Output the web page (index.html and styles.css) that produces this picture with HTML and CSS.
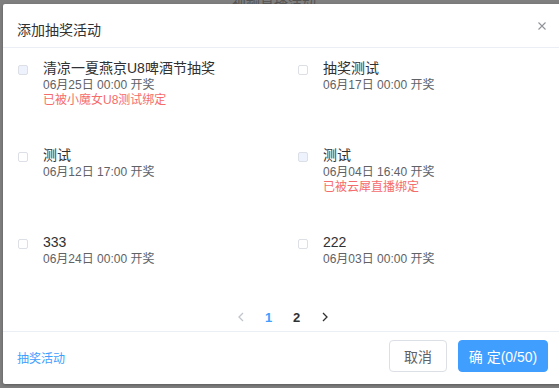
FILE: index.html
```html
<!DOCTYPE html>
<html lang="zh-CN">
<head>
    <meta charset="UTF-8">
    <meta name="viewport" content="width=device-width, initial-scale=1.0">
    <title>添加抽奖活动</title>
    <link rel="stylesheet" href="styles.css">
</head>
<body>
    <div class="page-behind">视频直播活动</div>
    <div class="overlay"></div>

    <div class="dialog">
        <div class="dialog-header">
            <span class="dialog-title">添加抽奖活动</span>
            <span class="dialog-close">
                <svg width="8" height="8" viewBox="0 0 8 8"><path d="M0.5 0.5 L7.5 7.5 M7.5 0.5 L0.5 7.5" stroke="#909399" stroke-width="1.1" fill="none"/></svg>
            </span>
        </div>

        <div class="dialog-body">
            <div class="lottery-list">
                <label class="lottery-item">
                    <span class="checkbox disabled"></span>
                    <span class="info">
                        <span class="name">清凉一夏燕京U8啤酒节抽奖</span>
                        <span class="time">06月25日 00:00 开奖</span>
                        <span class="bound">已被小魔女U8测试绑定</span>
                    </span>
                </label>
                <label class="lottery-item">
                    <span class="checkbox"></span>
                    <span class="info">
                        <span class="name">抽奖测试</span>
                        <span class="time">06月17日 00:00 开奖</span>
                    </span>
                </label>
                <label class="lottery-item">
                    <span class="checkbox"></span>
                    <span class="info">
                        <span class="name">测试</span>
                        <span class="time">06月12日 17:00 开奖</span>
                    </span>
                </label>
                <label class="lottery-item">
                    <span class="checkbox disabled"></span>
                    <span class="info">
                        <span class="name">测试</span>
                        <span class="time">06月04日 16:40 开奖</span>
                        <span class="bound">已被云犀直播绑定</span>
                    </span>
                </label>
                <label class="lottery-item">
                    <span class="checkbox"></span>
                    <span class="info">
                        <span class="name">333</span>
                        <span class="time">06月24日 00:00 开奖</span>
                    </span>
                </label>
                <label class="lottery-item">
                    <span class="checkbox"></span>
                    <span class="info">
                        <span class="name">222</span>
                        <span class="time">06月03日 00:00 开奖</span>
                    </span>
                </label>
            </div>

            <div class="pagination">
                <span class="pager-btn disabled">
                    <svg width="6" height="10" viewBox="0 0 6 10"><path d="M5 1 L1 5 L5 9" stroke="currentColor" stroke-width="1.3" fill="none"/></svg>
                </span>
                <span class="pager-num active">1</span>
                <span class="pager-num">2</span>
                <span class="pager-btn">
                    <svg width="6" height="10" viewBox="0 0 6 10"><path d="M1 1 L5 5 L1 9" stroke="currentColor" stroke-width="1.3" fill="none"/></svg>
                </span>
            </div>
        </div>

        <div class="dialog-footer">
            <a class="footer-link" href="#">抽奖活动</a>
            <div class="footer-buttons">
                <button type="button" class="btn">取消</button>
                <button type="button" class="btn btn-primary">确 定(0/50)</button>
            </div>
        </div>
    </div>
</body>
</html>
```

FILE: styles.css
```css
* {
    box-sizing: border-box;
}
body {
    margin: 0;
    width: 559px;
    height: 388px;
    overflow: hidden;
    position: relative;
    background: #fff;
    font-family: 'Liberation Sans', 'Noto Sans CJK SC', sans-serif;
}
.page-behind {
    position: absolute;
    left: 232px;
    top: -5px;
    font-size: 14px;
    line-height: 14px;
    color: #aaa;
}
.overlay {
    position: absolute;
    inset: 0;
    background: rgba(0,0,0,0.5);
}
.dialog {
    position: absolute;
    left: 3px;
    top: 4px;
    width: 559px;
    height: 380px;
    background: white;
    border-radius: 2px;
    box-shadow: 0 1px 3px rgba(0,0,0,0.3);
    display: flex;
    flex-direction: column;
}
.dialog-header {
    display: flex;
    justify-content: space-between;
    padding: 15px 16px 6px 14px;
    border-bottom: 1px solid #ebeef5;
    height: 44px;
}
.dialog-title {
    font-size: 14px;
    line-height: 22px;
    color: #303133;
}
.dialog-close {
    display: flex;
    margin-top: 3px;
}
.dialog-body {
    flex: 1;
    padding: 11px 15px 0 15px;
    display: flex;
    flex-direction: column;
}
.lottery-list {
    display: grid;
    grid-template-columns: 280px 1fr;
    grid-auto-rows: 50px;
    row-gap: 37px;
}
.lottery-item {
    display: flex;
    align-items: flex-start;
}
.checkbox {
    width: 10px;
    height: 10px;
    margin-top: 6px;
    margin-right: 15px;
    border: 1px solid #dcdfe6;
    border-radius: 2px;
    background: #fff;
    flex-shrink: 0;
}
.checkbox.disabled {
    background: #edf2fc;
}
.info {
    display: flex;
    flex-direction: column;
}
.name {
    font-size: 14px;
    line-height: 18px;
    color: #303133;
}
.time {
    font-size: 12px;
    line-height: 16px;
    color: #606266;
}
.bound {
    font-size: 12px;
    line-height: 15px;
    color: #f56c6c;
}
.pagination {
    margin-top: 21px;
    height: 26px;
    display: flex;
    justify-content: center;
    align-items: center;
}
.pager-btn,
.pager-num {
    width: 28px;
    height: 26px;
    display: flex;
    align-items: center;
    justify-content: center;
    font-size: 13px;
    font-weight: bold;
    color: #303133;
}
.pager-btn.disabled {
    color: #c0c4cc;
}
.pager-num.active {
    color: #409eff;
}
.dialog-footer {
    border-top: 1px solid #ebeef5;
    padding: 8px 14px 12px 14px;
    display: flex;
    justify-content: space-between;
    align-items: center;
}
.footer-link {
    font-size: 12px;
    color: #409eff;
    text-decoration: none;
    margin-top: 3px;
}
.footer-buttons {
    display: flex;
}
.btn {
    height: 32px;
    padding: 0 14px;
    font-family: inherit;
    font-size: 14px;
    color: #606266;
    background: white;
    border: 1px solid #dcdfe6;
    border-radius: 4px;
    margin-left: 11px;
    cursor: pointer;
}
.btn-primary {
    width: 90px;
    padding: 0;
    background: #409eff;
    border-color: #409eff;
    color: white;
}
```
